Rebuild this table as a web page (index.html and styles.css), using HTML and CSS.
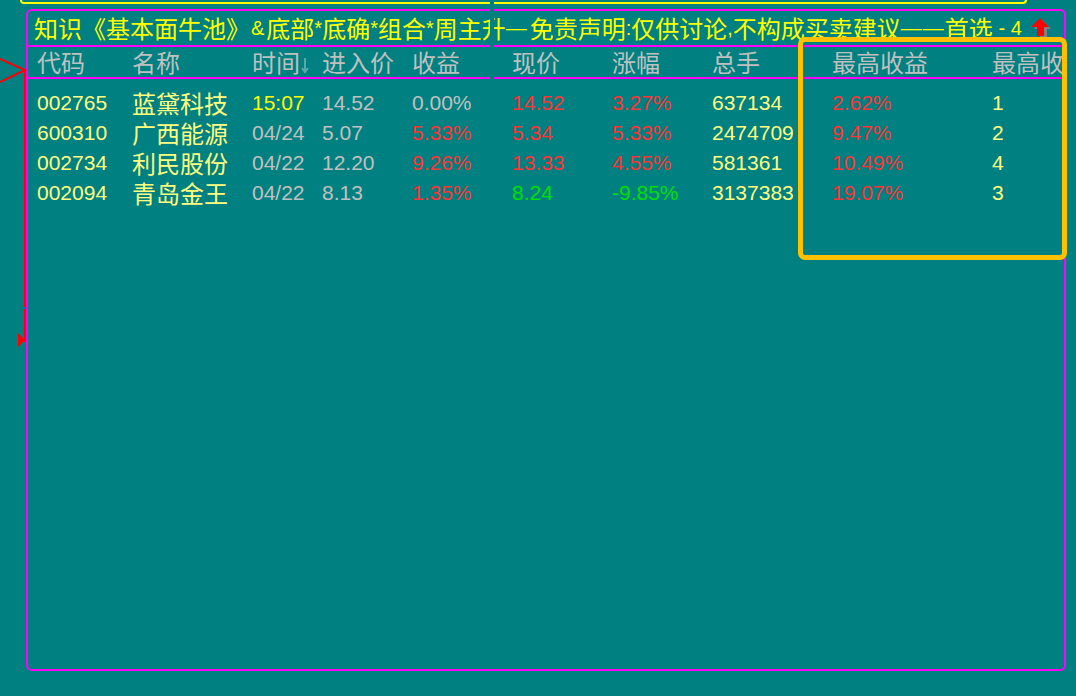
FILE: index.html
```html
<!DOCTYPE html>
<html>
<head>
<meta charset="utf-8">
<link rel="stylesheet" href="styles.css">
</head>
<body>
<div class="topbar"></div>
<div class="panel">
  <div class="title">知识《基本面牛池》<span class="a amp">&amp;</span>底部<span class="a">*</span>底确<span class="a">*</span>组合<span class="a">*</span>周主升<span class="d d1">—</span>免责声明<span class="a">:</span>仅供讨论<span class="a">,</span>不构成买卖建议<span class="d d2">——</span>首选<span class="a end"> - 4</span><svg class="up" width="24" height="20" viewBox="0 0 24 20"><polygon points="13,2 22,11 18,11 18,20 11,20 11,11 5,11" fill="#808080"/><polygon points="11,0 20,9 15,9 15,18 8,18 8,9 2,9" fill="#ff0000"/></svg></div>
  <div class="grid head">
    <div class="cn">代码</div>
    <div class="cn">名称</div>
    <div class="cn">时间<svg class="sort" width="8" height="18" viewBox="0 0 8 18"><path d="M4 2V16M1 12L4 16L7 12" stroke="#5aa8a8" stroke-width="2" fill="none"/></svg></div>
    <div class="cn">进入价</div>
    <div class="cn">收益</div>
    <div class="cn">现价</div>
    <div class="cn">涨幅</div>
    <div class="cn">总手</div>
    <div class="cn">最高收益</div>
    <div class="cn">最高收益排名</div>
  </div>
  <div class="rows">
    <div class="grid row">
      <div class="py">002765</div><div class="cn py">蓝黛科技</div><div class="yl">15:07</div><div class="gy">14.52</div><div class="gy">0.00%</div><div class="rd">14.52</div><div class="rd">3.27%</div><div class="py">637134</div><div class="rd">2.62%</div><div class="py">1</div>
    </div>
    <div class="grid row">
      <div class="py">600310</div><div class="cn py">广西能源</div><div class="gy">04/24</div><div class="gy">5.07</div><div class="rd">5.33%</div><div class="rd">5.34</div><div class="rd">5.33%</div><div class="py">2474709</div><div class="rd">9.47%</div><div class="py">2</div>
    </div>
    <div class="grid row">
      <div class="py">002734</div><div class="cn py">利民股份</div><div class="gy">04/22</div><div class="gy">12.20</div><div class="rd">9.26%</div><div class="rd">13.33</div><div class="rd">4.55%</div><div class="py">581361</div><div class="rd">10.49%</div><div class="py">4</div>
    </div>
    <div class="grid row">
      <div class="py">002094</div><div class="cn py">青岛金王</div><div class="gy">04/22</div><div class="gy">8.13</div><div class="rd">1.35%</div><div class="gr">8.24</div><div class="gr">-9.85%</div><div class="py">3137383</div><div class="rd">19.07%</div><div class="py">3</div>
    </div>
  </div>
</div>
<div class="split"></div>
<div class="hl"></div>
<svg class="marker" width="30" height="360" viewBox="0 0 30 360">
  <polyline points="0,59 25,70 0,82" stroke="#ff0000" stroke-width="2" fill="none"/>
  <rect x="24" y="70" width="2" height="237" fill="#ff0000"/>
  <rect x="24" y="309" width="2" height="33" fill="#ff0000"/>
  <polygon points="18,333 25,340 18,347" fill="#ff0000"/>
</svg>
</body>
</html>
```
FILE: styles.css
```css
html, body {
  margin: 0;
  padding: 0;
}
body {
  width: 1076px;
  height: 696px;
  overflow: hidden;
  position: relative;
  background: #008080;
  font-family: "Liberation Sans", "Noto Sans CJK SC", sans-serif;
}
.topbar {
  margin-left: 20px;
  width: 1003px;
  height: 2px;
  border: 2px solid #ffff00;
  border-top: none;
  border-radius: 0 0 5px 5px;
  box-sizing: content-box;
}
.panel {
  margin-top: 5px;
  margin-left: 26px;
  width: 1040px;
  height: 662px;
  box-sizing: border-box;
  border: 2px solid #ff00ff;
  border-radius: 6px;
  overflow: hidden;
}
.title {
  height: 36px;
  box-sizing: border-box;
  border-bottom: 2px solid #ff00ff;
  padding-left: 6px;
  display: flex;
  align-items: center;
  white-space: nowrap;
  overflow: hidden;
  color: #ffff00;
  font-family: "Noto Sans CJK SC", sans-serif;
  font-size: 24px;
  line-height: 30px;
}
.title .a {
  font-family: "Liberation Sans", sans-serif;
  font-size: 20px;
  white-space: pre;
}
.title .amp {
  margin-left: 1px;
  margin-right: 2px;
}
.title .d {
  font-family: "Liberation Sans", sans-serif;
  font-size: 21px;
}
.title .d1 {
  letter-spacing: 3px;
}
.title .d2 {
  letter-spacing: 1px;
}
.up {
  margin-left: 7px;
  flex: none;
}
.grid {
  display: grid;
  grid-template-columns: 95px 120px 70px 90px 100px 100px 100px 120px 160px 1fr;
  padding-left: 9px;
  white-space: nowrap;
}
.head {
  height: 32px;
  box-sizing: border-box;
  border-bottom: 2px solid #ff00ff;
  color: #c0c0c0;
  line-height: 30px;
}
.cn {
  font-family: "Noto Sans CJK SC", sans-serif;
  font-size: 24px;
}
.sort {
  margin-left: 1px;
  vertical-align: -2px;
}
.rows {
  padding-top: 9px;
}
.row {
  height: 30px;
  line-height: 30px;
  font-size: 21px;
}
.py { color: #ffff80; }
.yl { color: #ffff00; }
.gy { color: #c0c0c0; }
.rd { color: #ff3333; }
.gr { color: #00e000; }
.split {
  position: absolute;
  left: 490px;
  top: 0;
  width: 4px;
  height: 80px;
  background: #008080;
}
.hl {
  position: absolute;
  left: 798px;
  top: 37px;
  width: 269px;
  height: 223px;
  box-sizing: border-box;
  border: 5px solid #ffc000;
  border-radius: 7px;
}
.marker {
  position: absolute;
  left: 0;
  top: 0;
}
```
